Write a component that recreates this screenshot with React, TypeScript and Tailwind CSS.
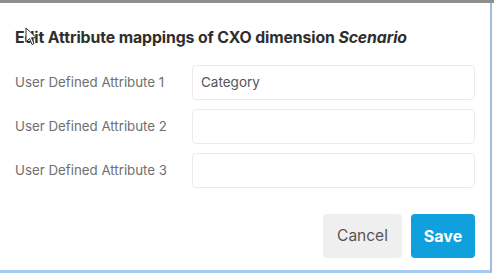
export default function App() {
  const rows = [
    { label: "User Defined Attribute 1", value: "Category" },
    { label: "User Defined Attribute 2", value: "" },
    { label: "User Defined Attribute 3", value: "" },
  ];

  return (
    <div className="relative w-[494px] h-[273px] overflow-hidden bg-white font-['Inter',sans-serif]">
      <div className="h-[3px] bg-[#8f8f8f]" />
      <div className="flex h-[270px]">
        <div className="flex-1 flex flex-col border-b-[3px] border-[#a8ccef]">
          <h1 className="pl-[15px] pt-[25px] text-[15.8px] leading-[20px] font-bold text-[#2e2e2e] tracking-[-0.1px]">
            Edit Attribute mappings of CXO dimension <span className="italic">Scenario</span>
          </h1>

          <div className="mt-[17px] flex flex-col gap-[9px] pl-[15px] pr-[15px]">
            {rows.map((row) => (
              <div key={row.label} className="flex items-center">
                <label className="w-[177px] text-[13.3px] text-[#6f6f6f]">{row.label}</label>
                <div className="w-[283px] h-[35px] rounded-[4px] border border-[#ebebeb] flex items-center px-[8px] text-[13.5px] text-[#555]">
                  {row.value}
                </div>
              </div>
            ))}
          </div>

          <div className="mt-[26px] flex justify-end gap-[9px] pr-[15px]">
            <button className="w-[79px] h-[44px] rounded-[4px] bg-[#efefef] text-[15.5px] text-[#555]">
              Cancel
            </button>
            <button className="w-[64px] h-[44px] rounded-[4px] bg-[#0fa0dd] text-[16px] font-bold text-white">
              Save
            </button>
          </div>
        </div>
        <div className="w-[4px] border-l-[2px] border-[#9fbde0] bg-white" />
      </div>

      <svg className="absolute left-[25px] top-[27px]" width="13" height="19" viewBox="0 0 13 19">
        <path d="M1 1 L1 15 L4.5 11.5 L7 17.5 L9 16.5 L6.5 10.8 L11.5 10.8 Z" fill="#fff" stroke="#333" strokeWidth="1" strokeLinejoin="round" />
      </svg>
    </div>
  );
}
